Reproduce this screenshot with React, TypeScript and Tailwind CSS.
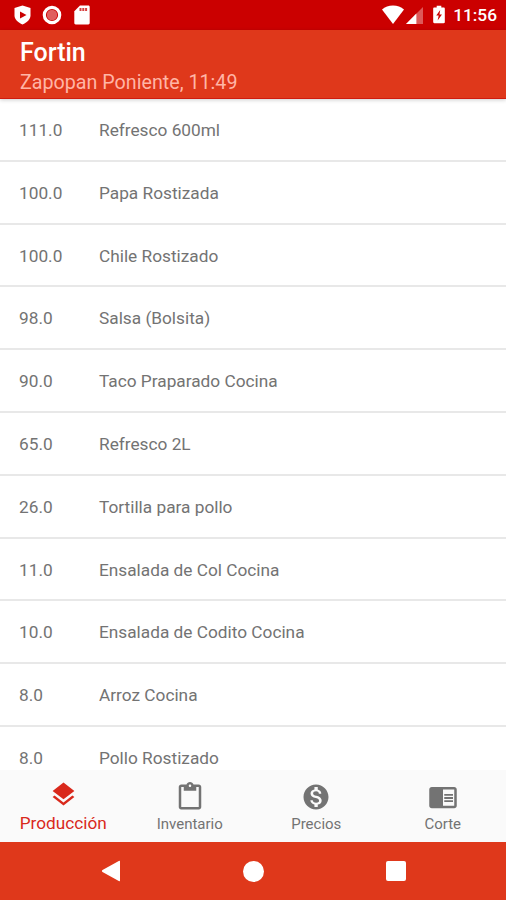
import { MdChromeReaderMode, MdContentPaste, MdLayers, MdMonetizationOn } from "react-icons/md";

const items = [
  { qty: "111.0", name: "Refresco 600ml" },
  { qty: "100.0", name: "Papa Rostizada" },
  { qty: "100.0", name: "Chile Rostizado" },
  { qty: "98.0", name: "Salsa (Bolsita)" },
  { qty: "90.0", name: "Taco Praparado Cocina" },
  { qty: "65.0", name: "Refresco 2L" },
  { qty: "26.0", name: "Tortilla para pollo" },
  { qty: "11.0", name: "Ensalada de Col Cocina" },
  { qty: "10.0", name: "Ensalada de Codito Cocina" },
  { qty: "8.0", name: "Arroz Cocina" },
  { qty: "8.0", name: "Pollo Rostizado" },
];

const tabs = [
  { label: "Inventario", icon: MdContentPaste },
  { label: "Precios", icon: MdMonetizationOn },
  { label: "Corte", icon: MdChromeReaderMode },
];

function StatusBar() {
  return (
    <div className="h-[30px] shrink-0 flex items-center justify-between bg-[#cb0000] pl-[14px] pr-[9px] text-white">
      <div className="flex items-center">
        <svg width="17" height="20" viewBox="0 0 17 20" fill="currentColor">
          <path d="M8.5.5 16.5 3v7.5c0 4-3.5 7-8 9-4.5-2-8-5-8-9V3z" />
          <path d="M6 6.5v7l6.500-3.500z" fill="#cb0000" />
        </svg>
        <svg className="ml-[11px]" width="20" height="20" viewBox="0 0 20 20">
          <circle cx="10" cy="10" r="7.7" fill="none" stroke="#fff" strokeWidth="3.2" />
          <circle cx="10" cy="10" r="5.2" fill="#e06060" />
        </svg>
        <svg className="ml-3" width="16" height="20" viewBox="0 0 16 20">
          <path d="M6 .5h8.3c.8 0 1.4.6 1.4 1.4v16.2c0 .8-.6 1.4-1.4 1.4H1.7c-.8 0-1.4-.6-1.4-1.4V6.2z" fill="#fff" />
          <path d="M5.500 3h2v3h-2zm2.800 0h2v3h-2zm2.800 0h2v3h-2z" fill="#cb0000" opacity=".75" />
        </svg>
      </div>
      <div className="flex items-center">
        <svg width="22" height="19" viewBox="0 0 22 19" fill="currentColor">
          <path d="M11 19 0 4.5C3 2 6.7.5 11 .5S19 2 22 4.5z" />
        </svg>
        <svg className="ml-[2px] mt-[2px]" width="17" height="17" viewBox="0 0 18 18" fill="currentColor">
          <path d="M18 0v18H0z" opacity=".35" />
          <path d="M11 7v11H0z" />
        </svg>
        <svg className="ml-[10px]" width="12" height="19" viewBox="0 0 13 20">
          <path d="M4 .5h5v2h2.500c.8 0 1.300.5 1.300 1.300v14.400c0 .8-.5 1.300-1.300 1.300h-10c-.8 0-1.300-.5-1.300-1.300V3.800c0-.8.5-1.300 1.300-1.300H4z" fill="#fff" />
          <path d="M7.8 5 3.500 11h2.700L5 16.500 9.700 10H7z" fill="#cb0000" />
        </svg>
        <span className="ml-[8px] mt-[2px] text-[17.300px] leading-none font-medium">11:56</span>
      </div>
    </div>
  );
}

function NavigationBar() {
  return (
    <div className="h-[58px] shrink-0 flex items-center justify-center gap-[122px] bg-[#df381b]">
      <svg width="20" height="22" viewBox="0 0 20 22" fill="#fff">
        <path d="M19 1.500v19c0 .8-.5 1-1.200.6L1.500 12c-.8-.5-.8-1.500 0-2L17.800.9c.7-.4 1.200-.2 1.200.6z" />
      </svg>
      <span className="size-[21px] rounded-full bg-white" />
      <span className="size-5 rounded-[2px] bg-white" />
    </div>
  );
}

export default function App() {
  return (
    <div className="h-[900px] w-[506px] flex flex-col overflow-hidden bg-white font-['Roboto',sans-serif]">
      <StatusBar />

      <header className="relative h-[69px] shrink-0 bg-[#df381b] border-b border-[#cf1c10] pl-5 pt-[8px] shadow-[0_1px_4px_rgba(0,0,0,0.2)]">
        <h1 className="text-[25px] leading-[30px] font-medium text-white">Fortin</h1>
        <p className="pt-px text-[19.7px] leading-[28px] text-[#ffb5a6]">Zapopan Poniente, 11:49</p>
      </header>

      <main className="flex-1 min-h-0 overflow-hidden text-[17.25px] text-[#737373]">
        {items.map((item, i) => (
          <div key={i} className="h-[62.8px] flex items-center border-b-2 border-[#e8e8e8] pl-[19px] pt-[3px]">
            <span className="w-20">{item.qty}</span>
            <span>{item.name}</span>
          </div>
        ))}
      </main>

      <nav className="h-[72px] shrink-0 grid grid-cols-4 bg-[#fafafa] text-[#737373]">
        <div className="flex flex-col items-center pt-[10px] text-[#d9291c]">
          <MdLayers size={29} />
          <span className="mt-[3px] text-[17.2px] leading-[22px]">Producción</span>
        </div>
        {tabs.map(({ label, icon: Icon }) => (
          <div key={label} className="flex flex-col items-center pt-[12px]">
            <Icon size={30} />
            <span className="mt-[2px] text-[15px] leading-[20px]">{label}</span>
          </div>
        ))}
      </nav>

      <NavigationBar />
    </div>
  );
}
